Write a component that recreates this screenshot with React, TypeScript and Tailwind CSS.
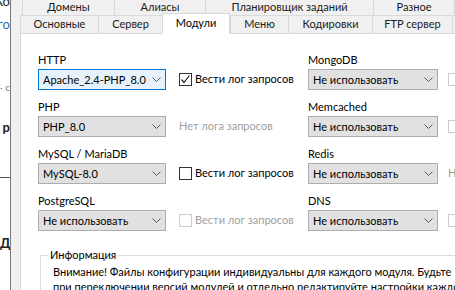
import React from "react";

const font = { fontFamily: 'Lato, "Noto Sans", "Liberation Sans", Arial, sans-serif' };

function Chevron() {
  return (
    <svg width="9" height="5" viewBox="0 0 9 5" className="shrink-0">
      <polyline points="0.5,0.5 4.5,4.5 8.5,0.5" fill="none" stroke="#5a5a5a" strokeWidth="1" />
    </svg>
  );
}

function Select({ value, w, focused }: { value: string; w: string; focused?: boolean }) {
  return (
    <div
      className={`${w} h-[21px] flex items-center justify-between pl-[4px] pr-[4px] border ${
        focused ? "border-[#0078d7] bg-[#e5f1fb]" : "border-[#adadad] bg-[#e1e1e1]"
      }`}
    >
      <span className="whitespace-nowrap leading-none">{value}</span>
      <Chevron />
    </div>
  );
}

function Check({ checked, disabled, label }: { checked?: boolean; disabled?: boolean; label?: string }) {
  return (
    <div className="flex items-center gap-[3px] whitespace-nowrap">
      <div
        className={`w-[13px] h-[13px] border bg-white flex items-center justify-center shrink-0 ${
          disabled ? "border-[#cccccc]" : "border-[#333333]"
        }`}
      >
        {checked && (
          <svg width="11" height="11" viewBox="0 0 11 11">
            <polyline points="1.5,5.5 4,8.5 9.5,1.5" fill="none" stroke="#222" strokeWidth="1.2" />
          </svg>
        )}
      </div>
      {label && <span className={disabled ? "text-[#a0a0a0]" : "text-black"}>{label}</span>}
    </div>
  );
}

function Module({
  label,
  value,
  w,
  focused,
  extra,
  gap,
}: {
  label: string;
  value: string;
  w: string;
  focused?: boolean;
  extra: React.ReactNode;
  gap: string;
}) {
  return (
    <div className="flex flex-col">
      <div className="h-[16px] leading-[16px]">{label}</div>
      <div className={`mt-[1px] flex items-center ${gap}`}>
        <Select value={value} w={w} focused={focused} />
        {extra}
      </div>
    </div>
  );
}

const rows = [
  {
    l: { label: "HTTP", value: "Apache_2.4-PHP_8.0", focused: true, extra: <Check checked label="Вести лог запросов" /> },
    r: { label: "MongoDB", value: "Не использовать", extra: <Check disabled /> },
  },
  {
    l: { label: "PHP", value: "PHP_8.0", extra: <span className="text-[#a0a0a0] whitespace-nowrap">Нет лога запросов</span> },
    r: { label: "Memcached", value: "Не использовать", extra: <Check disabled /> },
  },
  {
    l: { label: "MySQL / MariaDB", value: "MySQL-8.0", extra: <Check label="Вести лог запросов" /> },
    r: { label: "Redis", value: "Не использовать", extra: <span className="text-[#a0a0a0] whitespace-nowrap">Нет лога запросов</span> },
  },
  {
    l: { label: "PostgreSQL", value: "Не использовать", extra: <Check disabled label="Вести лог запросов" /> },
    r: { label: "DNS", value: "Не использовать", extra: <Check disabled /> },
  },
];

export default function App() {
  const row1 = [
    { t: "Домены", w: "w-[92px]" },
    { t: "Алиасы", w: "w-[91px]" },
    { t: "Планировщик заданий", w: "w-[168px]" },
    { t: "Разное", w: "w-[82px]" },
  ];
  const row2 = [
    { t: "Основные", w: "w-[78px]" },
    { t: "Сервер", w: "w-[64px]" },
    { t: "Модули", w: "w-[68px]", sel: true },
    { t: "Меню", w: "w-[58px]" },
    { t: "Кодировки", w: "w-[84px]" },
    { t: "FTP сервер", w: "w-[80px]" },
    { t: "", w: "w-[40px]" },
  ];
  return (
    <div className="w-[455px] h-[290px] flex overflow-hidden bg-[#f0f0f0] text-[11px] text-black" style={font}>
      {/* background window strip */}
      <div className="w-[11px] shrink-0 bg-white border-r border-[#7a7a7a] overflow-hidden flex flex-col items-end whitespace-nowrap">
        <div className="h-[12px] leading-[12px] -mt-[5px] text-[13px] text-[#222]">Ко</div>
        <div className="h-[16px] leading-[16px] mt-[9px] text-[13px] text-[#2f6fa8]">гo</div>
        <div className="h-[14px] leading-[14px] mt-[48px] text-[10px] text-[#777]">· с</div>
        <div className="h-[16px] leading-[16px] mt-[25px] text-[13px] font-bold text-[#222]">р</div>
        <div className="h-[1px] w-[10px] mt-[42px] bg-[#555]"></div>
        <div className="h-[16px] leading-[16px] mt-[57px] text-[13px] font-bold text-[#222] self-start">Д</div>
      </div>

      <div className="flex-1 min-w-0 flex flex-col pl-[9px]">
        {/* tab row 1 */}
        <div className="h-[15px] shrink-0 flex pl-[2px] overflow-visible">
          {row1.map((t, i) => (
            <div
              key={i}
              className={`${t.w} shrink-0 h-[15px] border-l border-[#d9d9d9] ${
                i === row1.length - 1 ? "border-r" : ""
              } flex items-center justify-center leading-none pb-[3px] whitespace-nowrap text-[#1a1a1a]`}
            >
              {t.t}
            </div>
          ))}
        </div>
        {/* tab row 2 */}
        <div className="h-[18px] shrink-0 flex items-start">
          {row2.map((t, i) =>
            t.sel ? (
              <div
                key={i}
                className={`${t.w} shrink-0 h-[21px] -mt-[2px] relative z-10 bg-white border-x border-t border-[#d9d9d9] flex items-center justify-center pb-[2px] whitespace-nowrap`}
              >
                {t.t}
              </div>
            ) : (
              <div
                key={i}
                className={`${t.w} shrink-0 h-[18px] bg-[#f0f0f0] border-t border-l border-[#d9d9d9] flex items-center justify-center whitespace-nowrap text-[#1a1a1a]`}
              >
                {t.t}
              </div>
            )
          )}
        </div>
        {/* panel */}
        <div className="flex-1 bg-white border-l border-t border-[#d9d9d9] pt-[18px] pl-[17px] flex flex-col">
          <div className="flex flex-col gap-[9px]">
            {rows.map((r, i) => (
              <div key={i} className="flex">
                <div className="w-[270px] shrink-0">
                  <Module
                    label={r.l.label}
                    value={r.l.value}
                    focused={r.l.focused}
                    w="w-[128px]"
                    gap="gap-[13px]"
                    extra={r.l.extra}
                  />
                </div>
                <Module label={r.r.label} value={r.r.value} w="w-[130px]" gap="gap-[10px]" extra={r.r.extra} />
              </div>
            ))}
          </div>
          {/* group box */}
          <div className="ml-[2px] mt-[24px] relative border-l border-t border-[#dcdcdc] pl-[12px] pt-[8px]">
            <div className="absolute -top-[9px] left-[7px] bg-white px-[2px] leading-[16px]">Информация</div>
            <div className="leading-[15px] whitespace-nowrap">
              Внимание! Файлы конфигурации индивидуальны для каждого модуля. Будьте
              <br />
              при переключении версий модулей и отдельно редактируйте настройки каждого
            </div>
          </div>
        </div>
      </div>
    </div>
  );
}
